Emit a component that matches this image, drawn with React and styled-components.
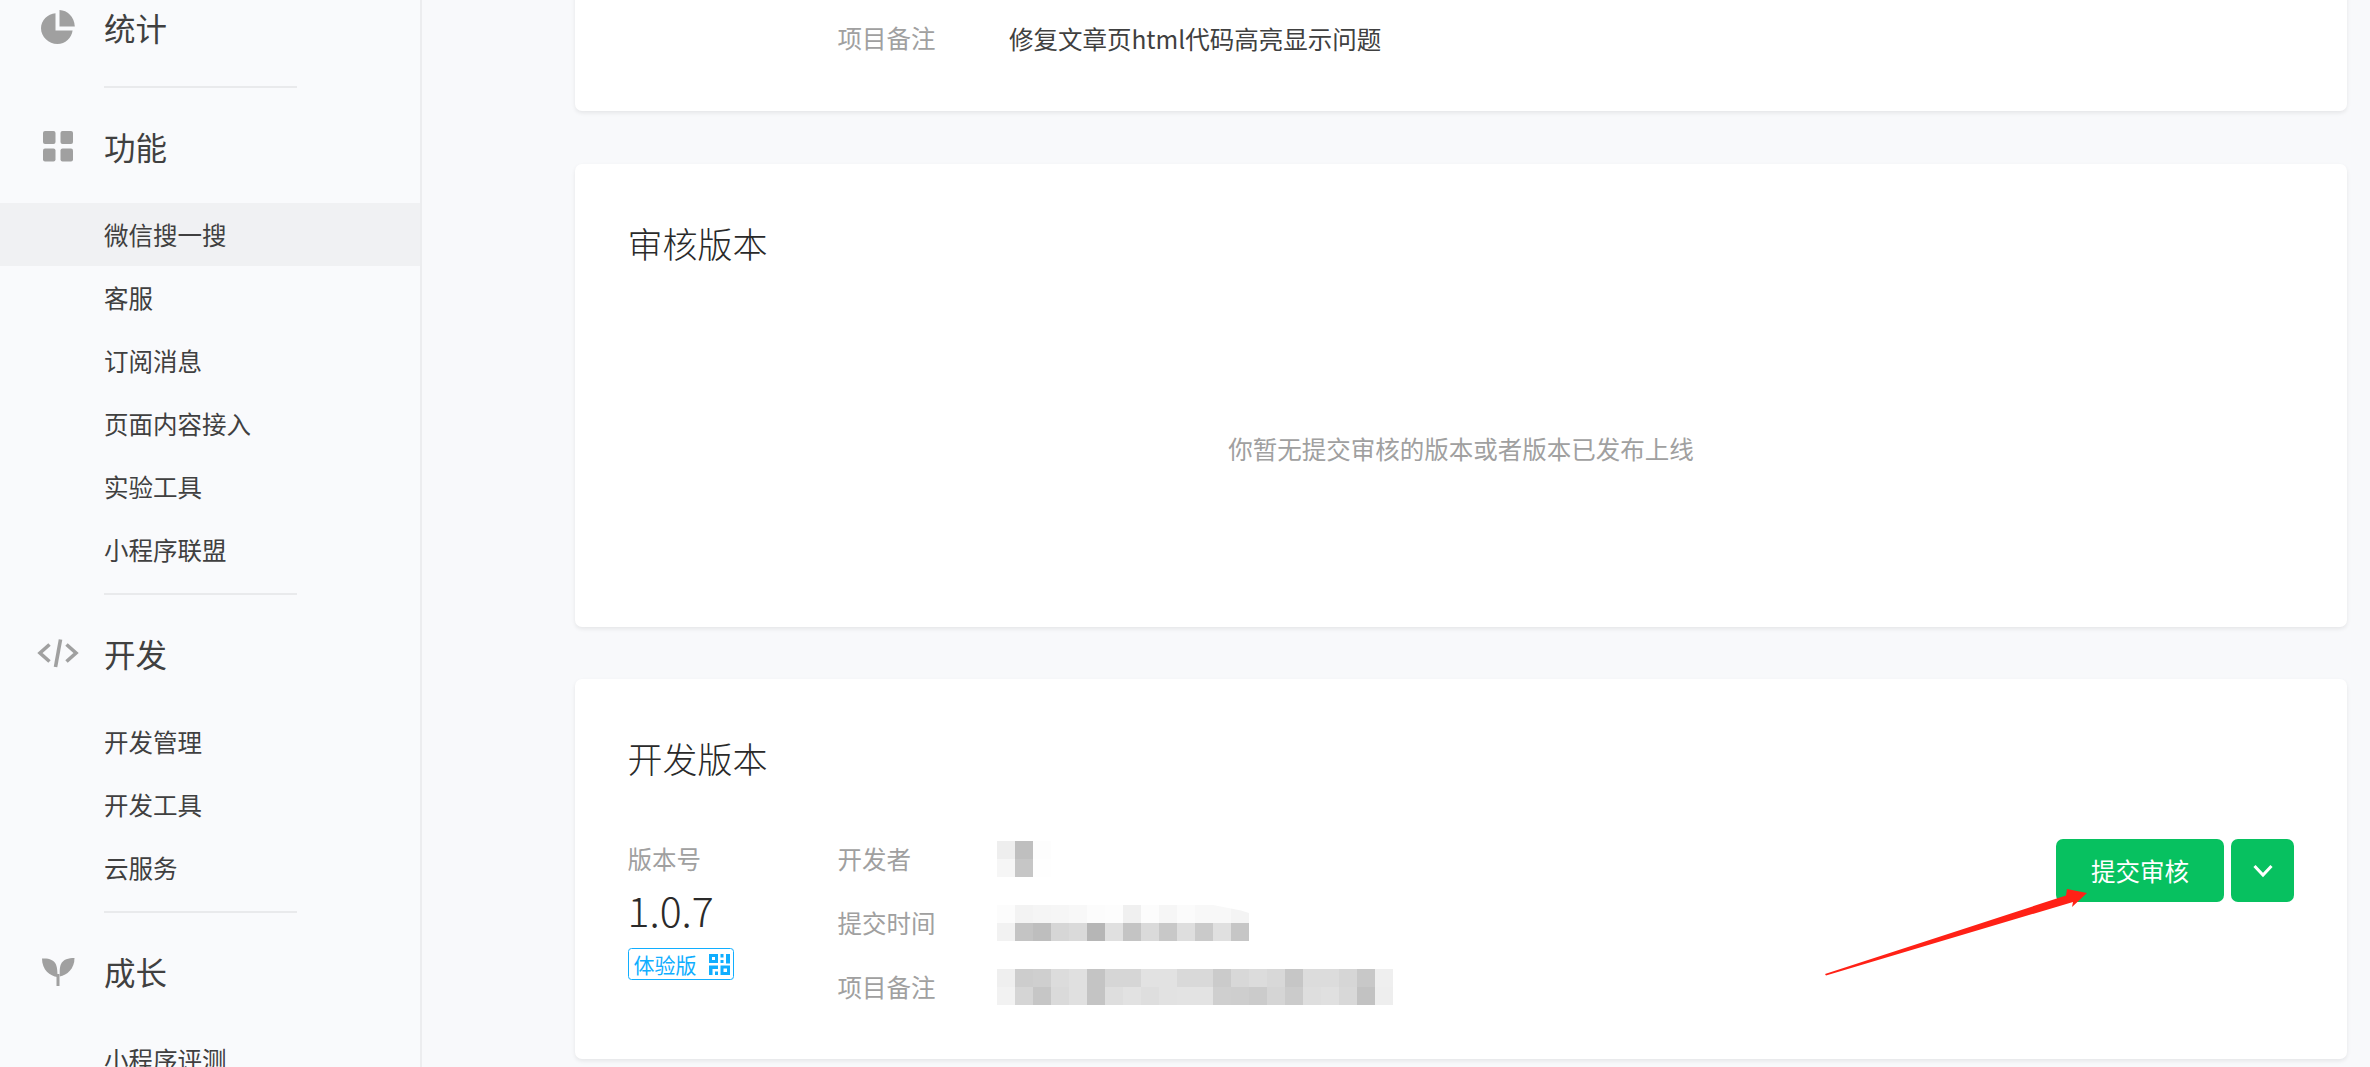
import React from "react";
import styled, { createGlobalStyle } from "styled-components";

const Global = createGlobalStyle`
  html, body { margin: 0; padding: 0; height: 100%; overflow: hidden; background: #f8f9fb; }
  #root { height: 100%; }
  * { box-sizing: border-box; }
`;

const Page = styled.div`
  position: relative;
  display: flex;
  height: 1067px;
  overflow: hidden;
  font-family: "Noto Sans CJK SC", "Liberation Sans", sans-serif;
  font-weight: 400;
  color: #404040;
`;

const Sidebar = styled.nav`
  flex: 0 0 422px;
  height: 100%;
  overflow: hidden;
  background: #f9fafc;
  border-right: 2px solid #ecedef;
`;

const Group = styled.div`
  padding-top: 28px;
  padding-bottom: 12px;
`;

const GroupHead = styled.div`
  display: flex;
  align-items: center;
  height: ${(p) => (p.$first ? "57px" : "63px")};
  margin-bottom: ${(p) => (p.$first ? "29px" : "24px")};
  padding-left: 104px;
  padding-bottom: 3px;
  font-size: 31.5px;
`;

const IconSlot = styled.span`
  display: flex;
  align-items: center;
  justify-content: center;
  width: 44px;
  height: 40px;
  margin-left: -68px;
  margin-right: 24px;
`;

const Item = styled.div`
  display: flex;
  align-items: center;
  height: 63px;
  padding-left: 104px;
  padding-bottom: 1px;
  font-size: 24.5px;
  background: ${(p) => (p.$active ? "#f0f1f3" : "transparent")};
`;

const Divider = styled.div`
  width: 193px;
  height: 2px;
  margin-left: 104px;
  background: #e9eaec;
`;

const Main = styled.main`
  flex: 1;
  min-width: 0;
  display: flex;
  flex-direction: column;
  gap: 52.5px;
  margin-top: -45.5px;
  padding: 0 23px 0 153px;
`;

const Card = styled.section`
  flex: none;
  padding: 52.5px 52.5px 40px;
  background: #fff;
  border-radius: 7px;
  box-shadow: 0 2px 4px rgba(0, 0, 0, 0.08);
`;

const ScrolledCard = styled(Card)`
  padding: 52px 52.5px 40.5px;
`;

const Title = styled.h2`
  display: flex;
  align-items: center;
  height: 57px;
  margin: 0 0 ${(p) => p.$gap || 0}px;
  padding-bottom: 5px;
  font-size: 35px;
  font-weight: 300;
  color: #2a2a2a;
`;

const Empty = styled.div`
  display: flex;
  align-items: center;
  justify-content: center;
  height: 353.5px;
  margin: 0 -52.5px -40px;
  padding-bottom: 3px;
  font-size: 24.5px;
  color: #a0a0a0;
`;

const Body = styled.div`
  display: flex;
  align-items: flex-start;
`;

const VersionCol = styled.div`
  flex: 0 0 210px;
`;

const VersionLabel = styled.div`
  display: flex;
  align-items: center;
  height: 64px;
  padding-bottom: 2px;
  font-size: 24.5px;
  color: #a0a0a0;
`;

const VersionNum = styled.div`
  height: 42px;
  margin-top: -3px;
  margin-bottom: 18px;
  font-size: 41px;
  font-weight: 300;
  line-height: 42px;
  color: #2a2a2a;
`;

const Badge = styled.span`
  display: inline-flex;
  align-items: center;
  gap: 12px;
  width: 106px;
  height: 32px;
  padding-left: 5px;
  border: 1.5px solid #10aeff;
  border-radius: 3.5px;
  font-size: 21px;
  color: #10aeff;
`;

const Details = styled.div`
  flex: 1;
`;

const Row = styled.div`
  display: flex;
  align-items: center;
  height: 64px;
  font-size: 24.5px;
`;

const RowLabel = styled.span`
  flex: 0 0 171.5px;
  margin-bottom: 2px;
  color: #a0a0a0;
`;

const Actions = styled.div`
  display: flex;
  gap: 7px;
  margin-top: 12px;
  margin-right: 0.5px;
`;

const GreenButton = styled.button`
  display: flex;
  align-items: center;
  justify-content: center;
  width: ${(p) => (p.$square ? "63px" : "168px")};
  height: 63px;
  padding: 0;
  border: 0;
  border-radius: 7px;
  background: #07c160;
  color: #fff;
  font: inherit;
  font-size: 24.5px;
`;

const MosaicSvg = styled.svg`
  display: block;
  margin-left: -12.5px;
  shape-rendering: crispEdges;
`;

const ArrowSvg = styled.svg`
  position: absolute;
  left: 0;
  top: 0;
  width: 2370px;
  height: 1067px;
  pointer-events: none;
`;

const iconColor = "#a0a0a0";

const PieIcon = () => (
  <svg width="36" height="36" viewBox="0 0 36 36" fill={iconColor}>
    <path d="M15.5 4.2v17.3h17.1C31.6 28.9 25.4 35 17.4 35 8.7 35 1 27.9 1 19.3 1 11.3 7.6 5 15.5 4.2z" />
    <path d="M19.5 1c8 .3 14.7 6.6 15.3 16.5H19.5z" />
  </svg>
);

const GridIcon = () => (
  <svg width="32" height="32" viewBox="0 0 32 32" fill={iconColor}>
    <rect x="1" y="1" width="12.5" height="13" rx="2" />
    <rect x="18.5" y="1" width="12.5" height="13" rx="2" />
    <rect x="1" y="18.5" width="12.5" height="13" rx="2" />
    <rect x="18.5" y="18.5" width="12.5" height="13" rx="2" />
  </svg>
);

const CodeIcon = () => (
  <svg width="42" height="32" viewBox="0 0 42 32" fill="none" stroke={iconColor} strokeWidth="3.6">
    <path d="M12.500 7.500 3 16l9.500 8.500" />
    <path d="M29.500 7.500 39 16l-9.500 8.500" />
    <path d="M23.500 2.500 18.500 30" />
  </svg>
);

const SproutIcon = () => (
  <svg width="36" height="32" viewBox="0 0 36 32" fill={iconColor}>
    <path d="M2 3.500c6-.6 12 1 14 6 1.400 3.500 1.500 8 1.500 12.500C10 21 2 15 2 3.500z" />
    <path d="M34.500 3c-6 0-11.500 1.500-13.500 6-1 2.300-1.300 5-1.300 8v4.500C27 20 34.500 14 34.500 3z" />
    <rect x="16.500" y="19" width="3" height="12" />
  </svg>
);

const QrIcon = () => (
  <svg width="21" height="21" viewBox="0 0 21 21" fill="#10aeff">
    <path fillRule="evenodd" d="M0 0h9v9H0zM3 3v3h3V3z" />
    <rect x="11.500" y="0" width="3" height="3.500" />
    <rect x="11.500" y="6" width="3" height="3" />
    <rect x="17" y="0" width="4" height="9.500" />
    <path fillRule="evenodd" d="M0 11.500h9V15H3.500v6H0z" />
    <rect x="6" y="17.500" width="3" height="3.500" />
    <path fillRule="evenodd" d="M11.500 11.500H21V21h-9.500zM14.500 14.500v3.500H18v-3.500z" />
  </svg>
);

const Chevron = () => (
  <svg width="20" height="14" viewBox="0 0 20 14" fill="none" stroke="#fff" strokeWidth="3">
    <path d="M1.500 2 10 11 18.500 2" />
  </svg>
);

const hex = (v) => `#${v}${v}${v}`;

const Mosaic = ({ rows, cover }) => {
  const width = rows[0].length * 18;
  return (
    <MosaicSvg width={width} height={36} viewBox={`0 0 ${width} 36`}>
      {rows.map((row, y) =>
        row.map((c, x) => <rect key={`${x}-${y}`} x={x * 18} y={y * 18} width="18" height="18" fill={hex(c)} />)
      )}
      {cover && <polygon points={cover} fill="#fff" shapeRendering="auto" />}
    </MosaicSvg>
  );
};

const developer = [
  ["ee", "bf", "fd"],
  ["f6", "c6", "fe"],
];
const submitted = [
  ["fc", "f3", "f5", "f6", "f8", "fc", "fd", "f0", "fc", "f6", "fb", "f8", "f8", "f4"],
  ["f2", "c4", "be", "d6", "da", "b6", "e0", "c4", "da", "c8", "de", "ca", "e0", "c6"],
];
const remark = [
  ["ef", "cd", "cf", "dc", "e0", "c4", "d6", "d6", "e2", "e2", "d9", "d9", "cb", "d8", "dc", "d8", "c6", "dc", "dc", "d6", "c8", "ef"],
  ["f2", "d5", "c6", "da", "e0", "c4", "de", "e2", "de", "e2", "e3", "e3", "cf", "ce", "cb", "d5", "cb", "de", "e0", "d8", "c2", "ee"],
];

const groups = [
  { icon: <GridIcon />, title: "功能", items: ["微信搜一搜", "客服", "订阅消息", "页面内容接入", "实验工具", "小程序联盟"], active: 0 },
  { icon: <CodeIcon />, title: "开发", items: ["开发管理", "开发工具", "云服务"] },
  { icon: <SproutIcon />, title: "成长", items: ["小程序评测"] },
];

export default function App() {
  return (
    <Page>
      <Global />
      <Sidebar>
        <GroupHead $first>
          <IconSlot>
            <PieIcon />
          </IconSlot>
          统计
        </GroupHead>
        <Divider />
        {groups.map((g, i) => (
          <React.Fragment key={g.title}>
            <Group>
              <GroupHead>
                <IconSlot>{g.icon}</IconSlot>
                {g.title}
              </GroupHead>
              {g.items.map((t, j) => (
                <Item key={t} $active={g.active === j}>
                  {t}
                </Item>
              ))}
            </Group>
            {i < groups.length - 1 && <Divider />}
          </React.Fragment>
        ))}
      </Sidebar>

      <Main>
        <ScrolledCard>
          <Row>
            <VersionCol />
            <RowLabel>项目备注</RowLabel>
            <span>修复文章页html代码高亮显示问题</span>
          </Row>
        </ScrolledCard>

        <Card>
          <Title>审核版本</Title>
          <Empty>你暂无提交审核的版本或者版本已发布上线</Empty>
        </Card>

        <Card>
          <Title $gap={38.5}>开发版本</Title>
          <Body>
            <VersionCol>
              <VersionLabel>版本号</VersionLabel>
              <VersionNum>1.0.7</VersionNum>
              <Badge>
                体验版
                <QrIcon />
              </Badge>
            </VersionCol>
            <Details>
              <Row>
                <RowLabel>开发者</RowLabel>
                <Mosaic rows={developer} />
              </Row>
              <Row>
                <RowLabel>提交时间</RowLabel>
                <Mosaic rows={submitted} cover="216,0 252,0 252,8 244,5.500 216,0" />
              </Row>
              <Row>
                <RowLabel>项目备注</RowLabel>
                <Mosaic rows={remark} />
              </Row>
            </Details>
            <Actions>
              <GreenButton>提交审核</GreenButton>
              <GreenButton $square aria-label="更多">
                <Chevron />
              </GreenButton>
            </Actions>
          </Body>
        </Card>
      </Main>

      <ArrowSvg viewBox="0 0 2370 1067">
        <polygon
          points="1825,974 2066,895.500 2067,889 2087,893 2072,907 2073,902 1826,975.500"
          fill="#ff2116"
        />
      </ArrowSvg>
    </Page>
  );
}
